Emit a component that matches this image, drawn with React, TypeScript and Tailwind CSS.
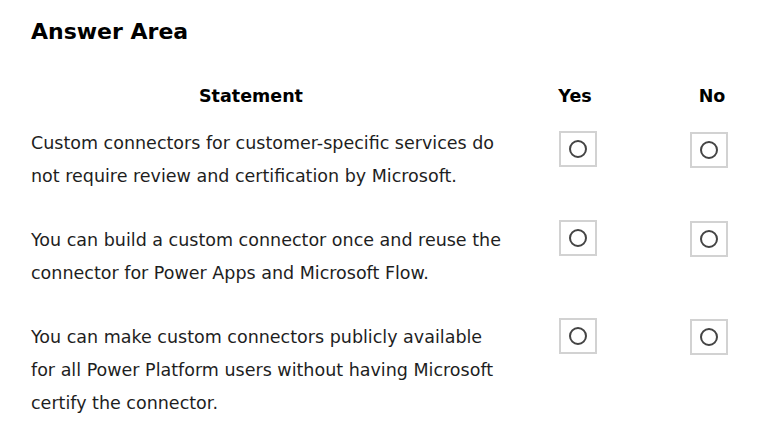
const rows = [
  {
    lines: [
      "Custom connectors for customer-specific services do",
      "not require review and certification by Microsoft.",
    ],
    yes: "mt-[4px]",
    no: "mt-[5px]",
  },
  {
    lines: [
      "You can build a custom connector once and reuse the",
      "connector for Power Apps and Microsoft Flow.",
    ],
    yes: "-mt-[4px]",
    no: "-mt-[3px]",
  },
  {
    lines: [
      "You can make custom connectors publicly available",
      "for all Power Platform users without having Microsoft",
      "certify the connector.",
    ],
    yes: "-mt-[3px]",
    no: "-mt-[2px]",
  },
];

function RadioBox({ className }: { className: string }) {
  return (
    <div
      className={
        "flex h-[36px] w-[38px] items-center justify-center border-2 border-[#d2d2d2] bg-white " +
        className
      }
    >
      <div className="h-[18px] w-[18px] rounded-full border-2 border-[#444]" />
    </div>
  );
}

export default function App() {
  return (
    <div className="h-[432px] w-[765px] bg-white pl-[31px] text-[#1e1e1e] [font-family:'DejaVu_Sans',sans-serif]">
      <h1 className="pt-[17px] text-[22px] font-bold leading-[30px] text-black">Answer Area</h1>

      <div className="mt-[34px] flex items-center text-[17.5px] font-bold leading-[30px] text-black">
        <div className="w-[440px] text-center">Statement</div>
        <div className="w-[208px] text-center">Yes</div>
        <div className="w-[66px] text-center">No</div>
      </div>

      <div className="mt-[16px] flex flex-col gap-[31px]">
        {rows.map((row, i) => (
          <div key={i} className="flex items-start">
            <div className="w-[528px] text-[17.5px] leading-[33px]">
              {row.lines.map((l, j) => (
                <div key={j}>{l}</div>
              ))}
            </div>
            <div className="flex w-[131px] justify-start">
              <RadioBox className={row.yes} />
            </div>
            <RadioBox className={row.no} />
          </div>
        ))}
      </div>
    </div>
  );
}
